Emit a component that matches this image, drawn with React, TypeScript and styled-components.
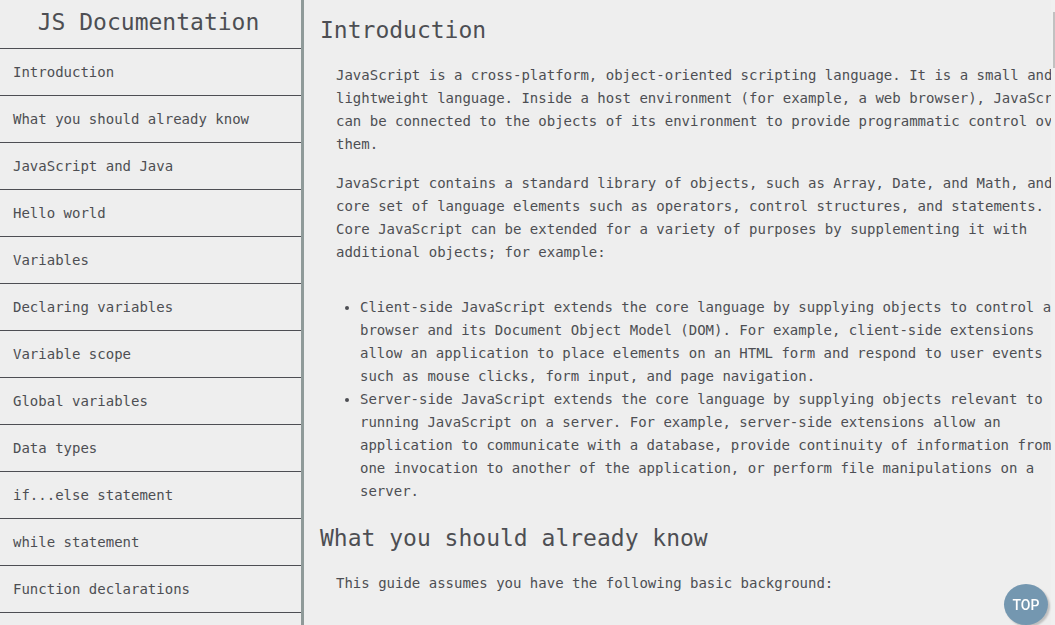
import React from "react";
import styled, { createGlobalStyle } from "styled-components";

const ink = "#4d4e53";

const GlobalStyle = createGlobalStyle`
  *, *::before, *::after { box-sizing: border-box; }
  body {
    margin: 0;
    background: #eeeeee;
    color: ${ink};
    font-family: "DejaVu Sans Mono", "Liberation Mono", monospace;
    font-size: 14px;
    line-height: 23px;
  }
`;

const Page = styled.div`
  display: flex;
  height: 100vh;
  overflow: hidden;
`;

const Sidebar = styled.nav`
  flex: none;
  width: 304px;
  overflow: hidden;
  border-right: 3px solid #8f9a99;
`;

const SiteTitle = styled.h1`
  margin: 0;
  padding: 6px 4px 10px 0;
  font-size: 23px;
  font-weight: 400;
  line-height: 32px;
  text-align: center;
`;

const NavList = styled.ul`
  margin: 0;
  padding: 0;
  list-style: none;
  border-top: 1px solid ${ink};
`;

const NavItem = styled.li`
  border-bottom: 1px solid ${ink};
`;

const NavLink = styled.a`
  display: block;
  padding: 12px 13px 11px;
  color: inherit;
  text-decoration: none;
`;

const Main = styled.main`
  flex: 1;
  min-width: 0;
  overflow: hidden;
  padding: 14px 0 0 16px;
`;

const Section = styled.section`
  margin-bottom: 19px;
`;

const SectionTitle = styled.h2`
  margin: 0 0 18px;
  font-size: 23px;
  font-weight: 400;
  line-height: 32px;
`;

const SectionBody = styled.div`
  min-width: 761px;
  padding-left: 16px;
`;

const Paragraph = styled.p`
  margin: 0 0 16px;
`;

const BulletList = styled.ul`
  margin: 32px 0 0;
  padding-left: 24px;
`;

const ScrollTrack = styled.div`
  flex: none;
  width: 4px;
  padding: 12px 0 0 2px;
  background: #f0f0f0;
`;

const ScrollThumb = styled.div`
  height: 56px;
  background: #c1c1c1;
`;

const TopButton = styled.button`
  position: fixed;
  right: 7px;
  bottom: 0;
  width: 44px;
  height: 41px;
  padding: 0;
  border: 0;
  border-radius: 50%;
  background: #7497b0;
  box-shadow: 2px 2px 2px rgba(0, 0, 0, 0.2);
  color: #ffffff;
  font-family: Roboto, "Open Sans", sans-serif;
  font-size: 14px;
  font-weight: 500;
  line-height: 20px;
  cursor: pointer;
`;

const topics = [
  "Introduction",
  "What you should already know",
  "JavaScript and Java",
  "Hello world",
  "Variables",
  "Declaring variables",
  "Variable scope",
  "Global variables",
  "Data types",
  "if...else statement",
  "while statement",
  "Function declarations",
];

const anchor = (topic: string) => topic.replace(/ /g, "_");

export default function App() {
  const mainRef = React.useRef<HTMLElement>(null);

  return (
    <>
      <GlobalStyle />
      <Page>
        <Sidebar aria-label="Topics">
          <SiteTitle>JS Documentation</SiteTitle>
          <NavList>
            {topics.map((topic) => (
              <NavItem key={topic}>
                <NavLink href={`#${anchor(topic)}`}>{topic}</NavLink>
              </NavItem>
            ))}
          </NavList>
        </Sidebar>
        <Main ref={mainRef}>
          <Section id={anchor(topics[0])}>
            <SectionTitle>Introduction</SectionTitle>
            <SectionBody>
              <Paragraph>
                JavaScript is a cross-platform, object-oriented scripting
                language. It is a small and lightweight language. Inside a host
                environment (for example, a web browser), JavaScript can be
                connected to the objects of its environment to provide
                programmatic control over them.
              </Paragraph>
              <Paragraph>
                JavaScript contains a standard library of objects, such as
                Array, Date, and Math, and a core set of language elements such
                as operators, control structures, and statements. Core
                JavaScript can be extended for a variety of purposes by
                supplementing it with additional objects; for example:
              </Paragraph>
              <BulletList>
                <li>
                  Client-side JavaScript extends the core language by supplying
                  objects to control a browser and its Document Object Model
                  (DOM). For example, client-side extensions allow an
                  application to place elements on an HTML form and respond to
                  user events such as mouse clicks, form input, and page
                  navigation.
                </li>
                <li>
                  Server-side JavaScript extends the core language by supplying
                  objects relevant to running JavaScript on a server. For
                  example, server-side extensions allow an application to
                  communicate with a database, provide continuity of information
                  from one invocation to another of the application, or perform
                  file manipulations on a server.
                </li>
              </BulletList>
            </SectionBody>
          </Section>
          <Section id={anchor(topics[1])}>
            <SectionTitle>What you should already know</SectionTitle>
            <SectionBody>
              <Paragraph>
                This guide assumes you have the following basic background:
              </Paragraph>
            </SectionBody>
          </Section>
        </Main>
        <ScrollTrack aria-hidden="true">
          <ScrollThumb />
        </ScrollTrack>
      </Page>
      <TopButton
        type="button"
        onClick={() => mainRef.current?.scrollTo({ top: 0 })}
      >
        TOP
      </TopButton>
    </>
  );
}
